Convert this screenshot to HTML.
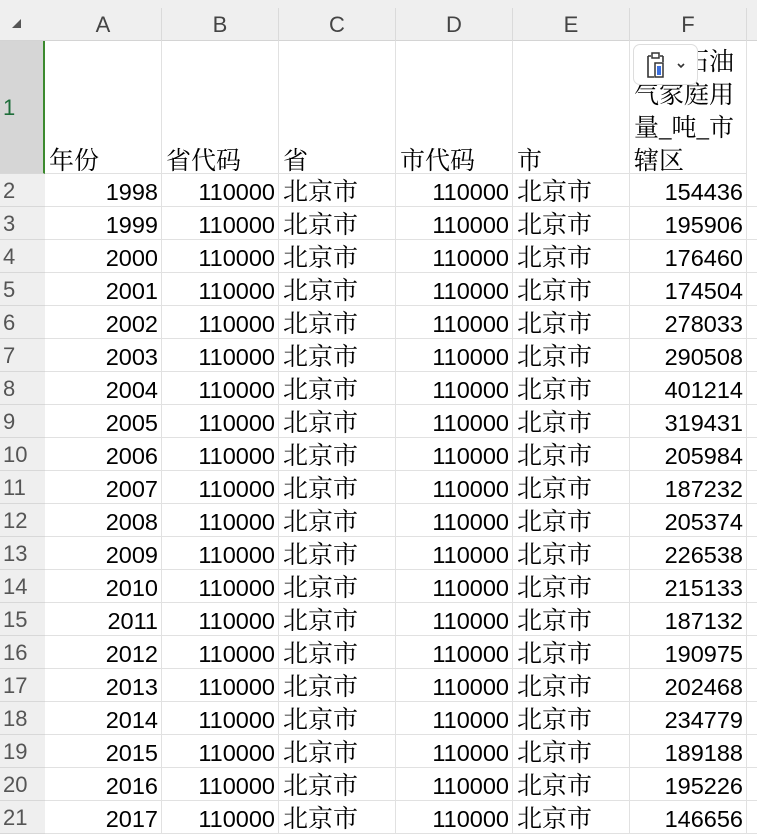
<!DOCTYPE html>
<html><head><meta charset="utf-8"><style>
body{margin:0;width:757px;height:824px;overflow:hidden;background:#fff;position:relative;font-family:"Liberation Sans",sans-serif}
.hdr{position:absolute;top:0;left:0;width:757px;height:41px;background:#efefef;border-bottom:1px solid #d4d4d4;box-sizing:border-box}
.col{position:absolute;top:8px;height:33px;border-right:1px solid #dadada;text-align:center;font-size:22px;color:#444;line-height:34px;box-sizing:border-box}
.rh{position:absolute;left:0;width:45px;background:#efefef;border-bottom:1px solid #d8d8d8;box-sizing:border-box;font-size:22px;color:#555;padding-left:3px}
.c{position:absolute;height:33px;border-right:1px solid #e1e1e1;border-bottom:1px solid #e1e1e1;box-sizing:border-box;font-size:23.5px;line-height:37px;color:#000;white-space:nowrap;overflow:hidden}
.n{text-align:right;padding-right:3px}
.z{font-family:"Liberation Serif","Noto Serif CJK SC",serif;font-size:25px;padding-left:4px;letter-spacing:0}
</style></head><body>
<div class="hdr"></div>
<svg style="position:absolute;left:10px;top:17px" width="14" height="14"><polygon points="11,2 11,11 2,11" fill="#555"/></svg>
<div class="col" style="left:45px;width:117px">A</div>
<div class="col" style="left:162px;width:117px">B</div>
<div class="col" style="left:279px;width:117px">C</div>
<div class="col" style="left:396px;width:117px">D</div>
<div class="col" style="left:513px;width:117px">E</div>
<div class="col" style="left:630px;width:117px">F</div>
<div class="col" style="left:747px;width:10px;border:none"></div>
<div class="rh" style="top:41px;height:133px;background:#d6d6d6;color:#1e6e3a;line-height:133px;border-right:2px solid #3c8a2e">1</div>
<div class="c z" style="left:45px;top:41px;width:117px;height:133px;line-height:33px;padding-top:104px">年份</div>
<div class="c z" style="left:162px;top:41px;width:117px;height:133px;line-height:33px;padding-top:104px">省代码</div>
<div class="c z" style="left:279px;top:41px;width:117px;height:133px;line-height:33px;padding-top:104px">省</div>
<div class="c z" style="left:396px;top:41px;width:117px;height:133px;line-height:33px;padding-top:104px">市代码</div>
<div class="c z" style="left:513px;top:41px;width:117px;height:133px;line-height:33px;padding-top:104px">市</div>
<div class="c z" style="left:630px;top:41px;width:117px;height:133px;line-height:33px;padding-top:5px;white-space:normal;word-break:break-all">液化石油气家庭用量_吨_市辖区</div>
<div style="position:absolute;left:633px;top:44px;width:65px;height:41px;background:#fff;border:1px solid #ddd;border-radius:7px;box-sizing:border-box">
<svg width="65" height="41" style="position:absolute;left:-1px;top:-1px"><path d="M15 12h3M27 12h3M15 12v21h6M30 12v6" fill="none" stroke="#333" stroke-width="1.6"/><rect x="19" y="9" width="7" height="5" fill="none" stroke="#333" stroke-width="1.5"/><rect x="22" y="19" width="8" height="14" fill="none" stroke="#333" stroke-width="1.5"/><rect x="24" y="22" width="4" height="9" fill="#3a6fe0"/><path d="M45 20l3 3 3-3" fill="none" stroke="#333" stroke-width="1.6"/></svg></div>
<div id="rows"></div>
<script>
var f=[154436,195906,176460,174504,278033,290508,401214,319431,205984,187232,205374,226538,215133,187132,190975,202468,234779,189188,195226,146656];
var h='';
for(var i=0;i<20;i++){var t=174+i*33;
h+='<div class="rh" style="top:'+t+'px;height:33px;line-height:34px">'+(i+2)+'</div>';
h+='<div class="c n" style="left:45px;top:'+t+'px;width:117px">'+(1998+i)+'</div>';
h+='<div class="c n" style="left:162px;top:'+t+'px;width:117px">110000</div>';
h+='<div class="c z" style="left:279px;top:'+t+'px;width:117px">北京市</div>';
h+='<div class="c n" style="left:396px;top:'+t+'px;width:117px">110000</div>';
h+='<div class="c z" style="left:513px;top:'+t+'px;width:117px">北京市</div>';
h+='<div class="c n" style="left:630px;top:'+t+'px;width:117px">'+f[i]+'</div>';
h+='<div class="c" style="left:747px;top:'+t+'px;width:10px;border-right:none"></div>';}
document.getElementById('rows').innerHTML=h;
</script>
</body></html>
